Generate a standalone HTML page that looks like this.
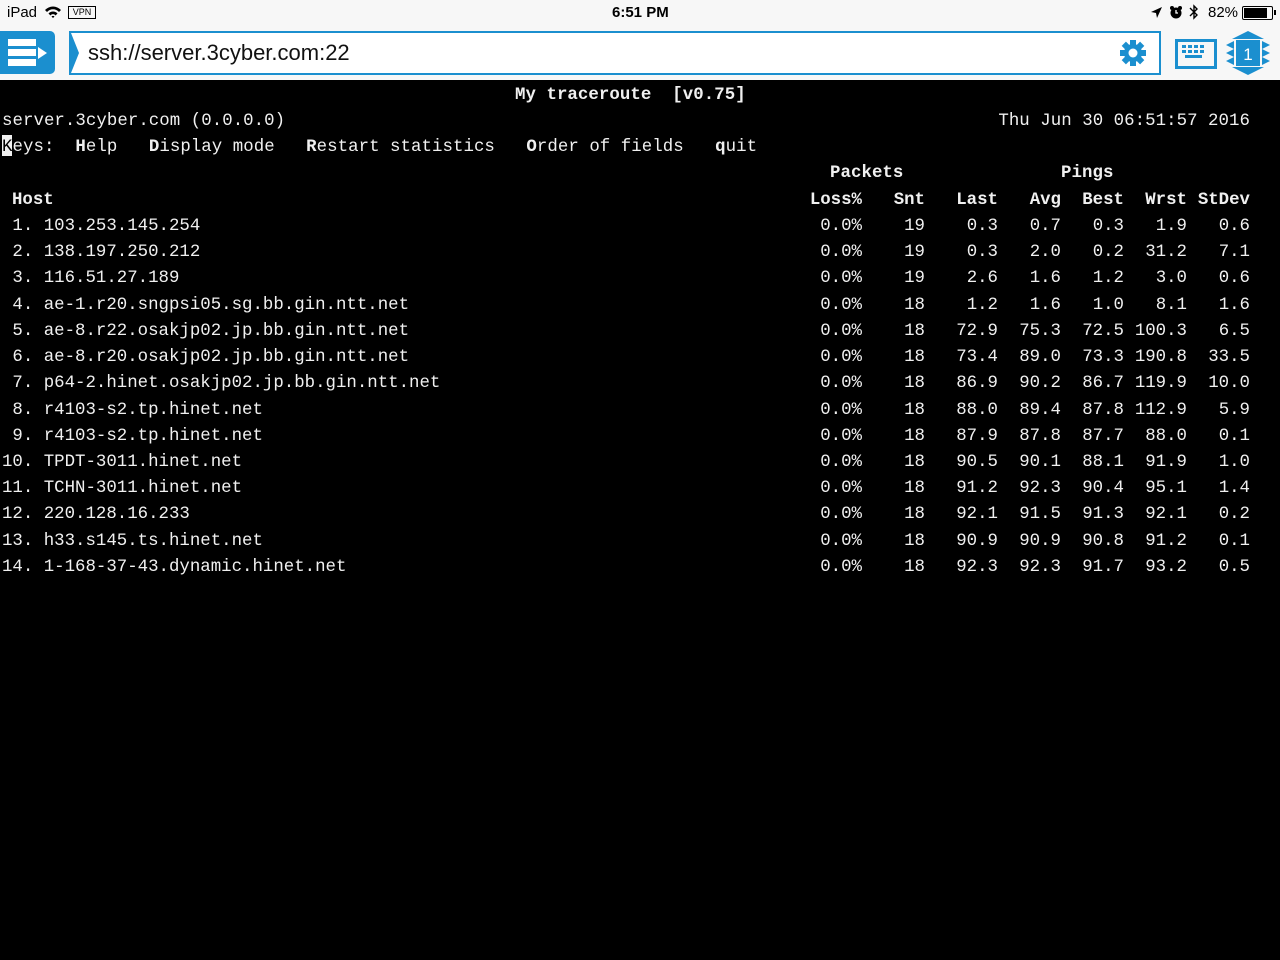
<!DOCTYPE html>
<html><head><meta charset="utf-8"><style>
body{margin:0;width:1280px;height:960px;background:#000;overflow:hidden;position:relative;font-family:"Liberation Sans",sans-serif}
#sb{position:absolute;left:0;top:0;width:1280px;height:25px;background:#f7f7f7;font-size:15px;color:#000}
#tb{position:absolute;left:0;top:25px;width:1280px;height:55px;background:#f7f7f7}
.t{position:absolute;font-family:"Liberation Mono",monospace;font-size:17.4px;color:#f0f0f0;white-space:pre;line-height:26px;height:26px;letter-spacing:0.05px}
.b{font-weight:bold}
.row{position:absolute;left:0;width:1280px;height:26px}
.row span{position:absolute;top:0;font-family:"Liberation Mono",monospace;font-size:17.4px;color:#f0f0f0;white-space:pre;line-height:26px;text-align:right}
.c0{left:2px;text-align:left!important}
.c1{right:418px}.c2{right:355px}.c3{right:282px}.c4{right:219px}.c5{right:156px}.c6{right:93px}.c7{right:30px}
</style></head><body>
<div id="sb">
<span style="position:absolute;left:7px;top:4px">iPad</span>
<svg style="position:absolute;left:44px;top:5px" width="18" height="14" viewBox="0 0 18 14"><path d="M1 5 A11 11 0 0 1 17 5 L15 7 A8 8 0 0 0 3 7Z M4.5 8.5 A6 6 0 0 1 13.5 8.5 L11.5 10.5 A3 3 0 0 0 6.5 10.5Z M7.5 11.5 L9 13 L10.5 11.5 A2 2 0 0 0 7.5 11.5Z" fill="#000"/></svg>
<div style="position:absolute;left:68px;top:6px;width:26px;height:11px;border:1px solid #000;font-size:9px;line-height:11px;text-align:center">VPN</div>
<span style="position:absolute;left:612px;top:4px;font-weight:bold">6:51 PM</span>
<svg style="position:absolute;left:1150px;top:6px" width="13" height="13" viewBox="0 0 13 13"><path d="M12 1 L1 6 L6 7 L7 12Z" fill="#000"/></svg>
<svg style="position:absolute;left:1169px;top:5px" width="14" height="14" viewBox="0 0 14 14"><circle cx="7" cy="8" r="5.5" fill="#000"/><circle cx="3" cy="3" r="2" fill="#000"/><circle cx="11" cy="3" r="2" fill="#000"/><path d="M7 5 V8 H9" stroke="#fff" stroke-width="1.3" fill="none"/></svg>
<svg style="position:absolute;left:1189px;top:4px" width="10" height="16" viewBox="0 0 10 16"><path d="M1 4 L8 11 L5 14 V2 L8 5 L1 12" stroke="#000" stroke-width="1.4" fill="none"/></svg>
<span style="position:absolute;left:1208px;top:4px">82%</span>
<div style="position:absolute;left:1242px;top:6px;width:29px;height:12px;border:1px solid #000;border-radius:2px"><div style="margin:1px;width:23px;height:10px;background:#000"></div></div>
<div style="position:absolute;left:1274px;top:10px;width:2px;height:5px;background:#000"></div>
</div>
<div id="tb">
<div style="position:absolute;left:0;top:6px;width:55px;height:43px;background:#1b8fcf;border-radius:0 5px 5px 0"></div>
<div style="position:absolute;left:8px;top:14px;width:28px;height:7px;background:#fff"></div>
<div style="position:absolute;left:8px;top:24px;width:28px;height:7px;background:#fff"></div>
<div style="position:absolute;left:8px;top:34px;width:28px;height:7px;background:#fff"></div>
<div style="position:absolute;left:38px;top:22px;width:0;height:0;border-left:9px solid #fff;border-top:6px solid transparent;border-bottom:6px solid transparent"></div>
<div style="position:absolute;left:69px;top:6px;width:1088px;height:40px;border:2px solid #1b8fcf;background:#fff"></div>
<div style="position:absolute;left:71px;top:8px;width:0;height:0;border-left:8px solid #1b8fcf;border-top:20px solid transparent;border-bottom:20px solid transparent"></div>
<span style="position:absolute;left:88px;top:15px;font-size:22px;color:#111">ssh://server.3cyber.com:22</span>
<svg style="position:absolute;left:1119px;top:14px" width="28" height="28" viewBox="0 0 28 28"><g fill="#1b8fcf"><circle cx="14" cy="14" r="9"/><rect x="11" y="1" width="6" height="26"/><rect x="1" y="11" width="26" height="6"/><rect x="11" y="1" width="6" height="26" transform="rotate(45 14 14)"/><rect x="11" y="1" width="6" height="26" transform="rotate(-45 14 14)"/></g><circle cx="14" cy="14" r="4.5" fill="#fff"/></svg>
<div style="position:absolute;left:1175px;top:14px;width:36px;height:24px;border:3px solid #1b8fcf"></div>
<svg style="position:absolute;left:1182px;top:20px" width="28" height="18"><g fill="#1b8fcf"><rect x="0" y="0" width="4" height="3"/><rect x="6" y="0" width="4" height="3"/><rect x="12" y="0" width="4" height="3"/><rect x="18" y="0" width="4" height="3"/><rect x="0" y="5" width="4" height="3"/><rect x="6" y="5" width="4" height="3"/><rect x="12" y="5" width="4" height="3"/><rect x="18" y="5" width="4" height="3"/><rect x="3" y="10" width="17" height="3"/></g></svg>
<svg style="position:absolute;left:1226px;top:6px" width="44" height="44" viewBox="0 0 44 44"><g fill="#1b8fcf"><polygon points="22,0 38,8 6,8"/><polygon points="22,44 38,36 6,36"/><polygon points="0,14 8,10 8,18"/><polygon points="0,22 8,18 8,26"/><polygon points="0,30 8,26 8,34"/><polygon points="44,14 36,10 36,18"/><polygon points="44,22 36,18 36,26"/><polygon points="44,30 36,26 36,34"/><rect x="10" y="9" width="24" height="26"/></g><text x="22" y="29" font-size="17" fill="#fff" text-anchor="middle" font-family="Liberation Sans">1</text></svg>
</div>

<div class="t b" style="left:515px;top:83px">My traceroute  [v0.75]</div>
<div class="t" style="left:2px;top:109px">server.3cyber.com (0.0.0.0)</div>
<div class="t" style="right:30px;top:109px">Thu Jun 30 06:51:57 2016</div>
<div style="position:absolute;left:2px;top:135px;width:10px;height:21px;background:#f0f0f0"></div>
<div class="t" style="left:2px;top:135px"><span style="color:#000">K</span>eys:  <b>H</b>elp   <b>D</b>isplay mode   <b>R</b>estart statistics   <b>O</b>rder of fields   <b>q</b>uit</div>
<div class="t b" style="left:830px;top:161px">Packets</div>
<div class="t b" style="left:1061px;top:161px">Pings</div>
<div class="row" style="top:188px"><span class="c0 b" style="left:12px">Host</span><span class="c1 b">Loss%</span><span class="c2 b">Snt</span><span class="c3 b">Last</span><span class="c4 b">Avg</span><span class="c5 b">Best</span><span class="c6 b">Wrst</span><span class="c7 b">StDev</span></div>
<div class="row" style="top:214px"><span class="c0"> 1. 103.253.145.254</span><span class="c1">0.0%</span><span class="c2">19</span><span class="c3">0.3</span><span class="c4">0.7</span><span class="c5">0.3</span><span class="c6">1.9</span><span class="c7">0.6</span></div>
<div class="row" style="top:240px"><span class="c0"> 2. 138.197.250.212</span><span class="c1">0.0%</span><span class="c2">19</span><span class="c3">0.3</span><span class="c4">2.0</span><span class="c5">0.2</span><span class="c6">31.2</span><span class="c7">7.1</span></div>
<div class="row" style="top:266px"><span class="c0"> 3. 116.51.27.189</span><span class="c1">0.0%</span><span class="c2">19</span><span class="c3">2.6</span><span class="c4">1.6</span><span class="c5">1.2</span><span class="c6">3.0</span><span class="c7">0.6</span></div>
<div class="row" style="top:293px"><span class="c0"> 4. ae-1.r20.sngpsi05.sg.bb.gin.ntt.net</span><span class="c1">0.0%</span><span class="c2">18</span><span class="c3">1.2</span><span class="c4">1.6</span><span class="c5">1.0</span><span class="c6">8.1</span><span class="c7">1.6</span></div>
<div class="row" style="top:319px"><span class="c0"> 5. ae-8.r22.osakjp02.jp.bb.gin.ntt.net</span><span class="c1">0.0%</span><span class="c2">18</span><span class="c3">72.9</span><span class="c4">75.3</span><span class="c5">72.5</span><span class="c6">100.3</span><span class="c7">6.5</span></div>
<div class="row" style="top:345px"><span class="c0"> 6. ae-8.r20.osakjp02.jp.bb.gin.ntt.net</span><span class="c1">0.0%</span><span class="c2">18</span><span class="c3">73.4</span><span class="c4">89.0</span><span class="c5">73.3</span><span class="c6">190.8</span><span class="c7">33.5</span></div>
<div class="row" style="top:371px"><span class="c0"> 7. p64-2.hinet.osakjp02.jp.bb.gin.ntt.net</span><span class="c1">0.0%</span><span class="c2">18</span><span class="c3">86.9</span><span class="c4">90.2</span><span class="c5">86.7</span><span class="c6">119.9</span><span class="c7">10.0</span></div>
<div class="row" style="top:398px"><span class="c0"> 8. r4103-s2.tp.hinet.net</span><span class="c1">0.0%</span><span class="c2">18</span><span class="c3">88.0</span><span class="c4">89.4</span><span class="c5">87.8</span><span class="c6">112.9</span><span class="c7">5.9</span></div>
<div class="row" style="top:424px"><span class="c0"> 9. r4103-s2.tp.hinet.net</span><span class="c1">0.0%</span><span class="c2">18</span><span class="c3">87.9</span><span class="c4">87.8</span><span class="c5">87.7</span><span class="c6">88.0</span><span class="c7">0.1</span></div>
<div class="row" style="top:450px"><span class="c0">10. TPDT-3011.hinet.net</span><span class="c1">0.0%</span><span class="c2">18</span><span class="c3">90.5</span><span class="c4">90.1</span><span class="c5">88.1</span><span class="c6">91.9</span><span class="c7">1.0</span></div>
<div class="row" style="top:476px"><span class="c0">11. TCHN-3011.hinet.net</span><span class="c1">0.0%</span><span class="c2">18</span><span class="c3">91.2</span><span class="c4">92.3</span><span class="c5">90.4</span><span class="c6">95.1</span><span class="c7">1.4</span></div>
<div class="row" style="top:502px"><span class="c0">12. 220.128.16.233</span><span class="c1">0.0%</span><span class="c2">18</span><span class="c3">92.1</span><span class="c4">91.5</span><span class="c5">91.3</span><span class="c6">92.1</span><span class="c7">0.2</span></div>
<div class="row" style="top:529px"><span class="c0">13. h33.s145.ts.hinet.net</span><span class="c1">0.0%</span><span class="c2">18</span><span class="c3">90.9</span><span class="c4">90.9</span><span class="c5">90.8</span><span class="c6">91.2</span><span class="c7">0.1</span></div>
<div class="row" style="top:555px"><span class="c0">14. 1-168-37-43.dynamic.hinet.net</span><span class="c1">0.0%</span><span class="c2">18</span><span class="c3">92.3</span><span class="c4">92.3</span><span class="c5">91.7</span><span class="c6">93.2</span><span class="c7">0.5</span></div>
</body></html>
